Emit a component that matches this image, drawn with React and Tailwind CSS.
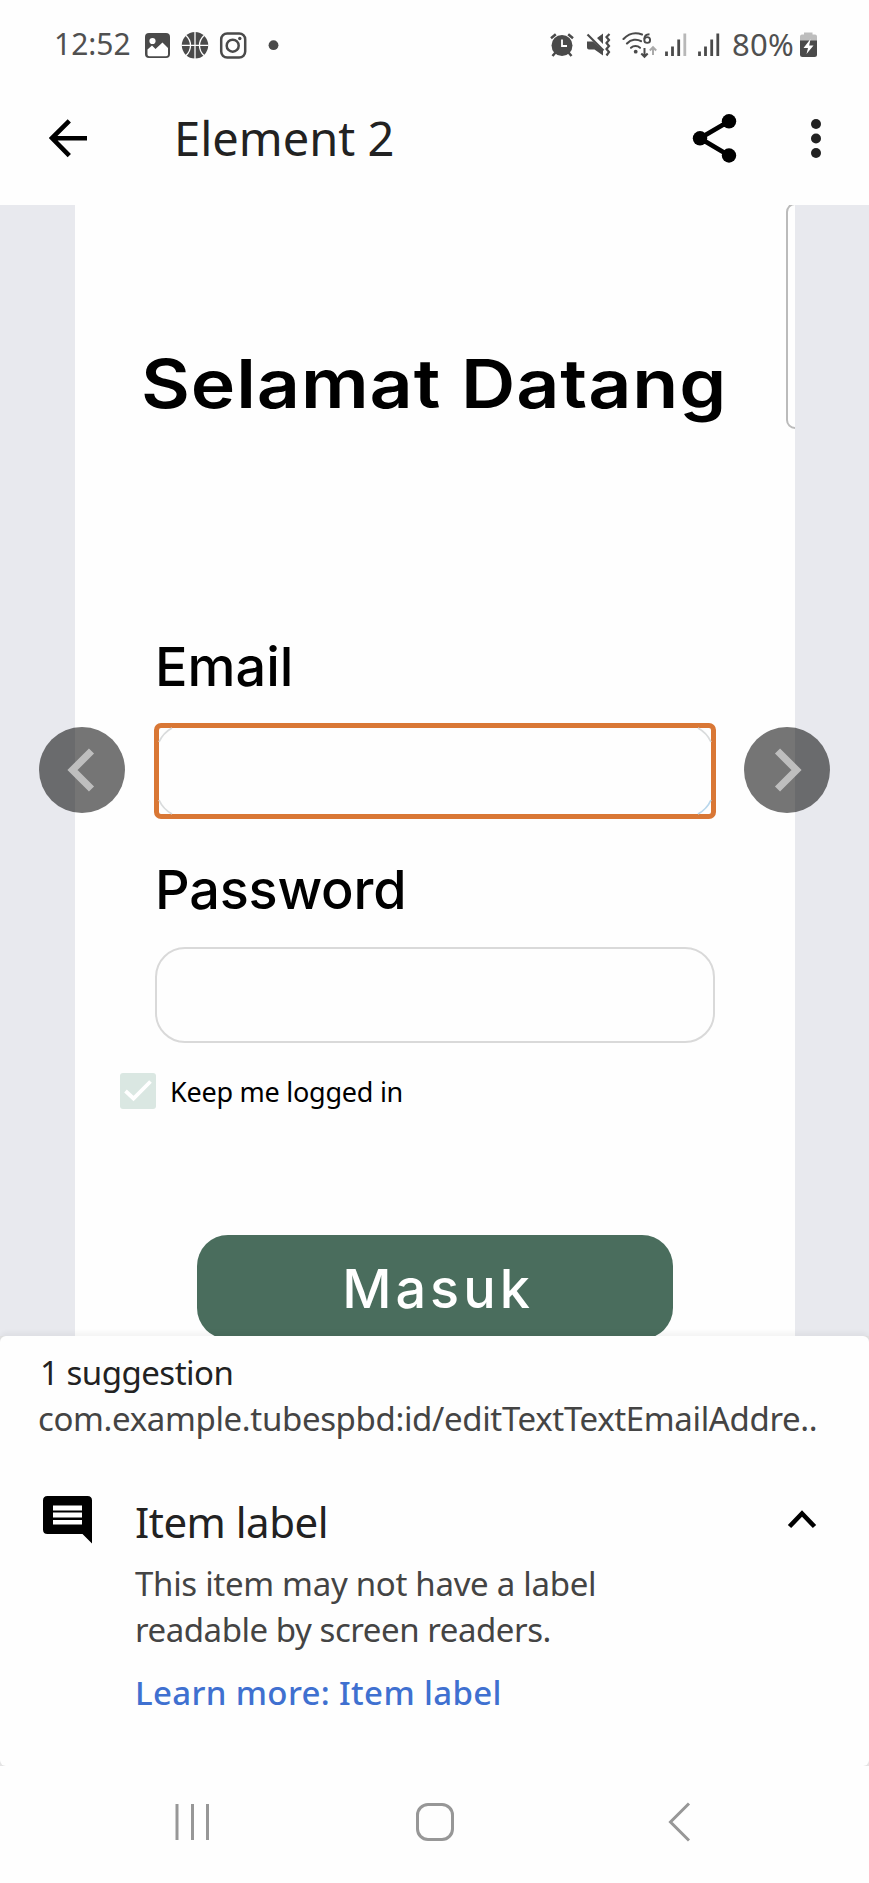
import React from "react";

const systemFont = "font-['Noto_Sans',sans-serif]";
const appFont = "font-['Inter',sans-serif]";

function NotificationIcons() {
  return (
    <svg className="ml-[14px] mt-[3px] h-[30px] w-[136px] shrink-0" viewBox="144 30 136 30" fill="none">
      <rect x="145" y="33" width="25" height="25" rx="4" fill="#4a4a4a" />
      <circle cx="152.5" cy="41" r="3.1" fill="#fff" />
      <path d="M147.5 49.5 152 45.5 155.5 49 162.5 42.5 168 48V54.500Q168 56.300 166.200 56.300H149.300Q147.500 56.300 147.500 54.500Z" fill="#fff" />
      <circle cx="195" cy="45.300" r="13.200" fill="#4a4a4a" />
      <path d="M195 32V59M181.500 45.300H208.500M186 35.500C192 41 192 50 186 55.500M204 35.500C198 41 198 50 204 55.500" stroke="#fff" strokeWidth="1.300" />
      <rect x="221.200" y="33.400" width="24" height="24.200" rx="6" stroke="#4a4a4a" strokeWidth="2.500" />
      <circle cx="232.700" cy="45.700" r="6" stroke="#4a4a4a" strokeWidth="2.500" />
      <circle cx="239.800" cy="38.500" r="1.700" fill="#4a4a4a" />
      <circle cx="273.500" cy="45.200" r="4.900" fill="#4a4a4a" />
    </svg>
  );
}

function SystemIcons() {
  return (
    <svg className="mt-[3px] h-[30px] w-[172px] shrink-0" viewBox="549 30 172 30" fill="none">
      <circle cx="562" cy="45.500" r="10.500" fill="#4a4a4a" />
      <path d="M551 38.200 555.800 34.200M573 38.200 568.200 34.200M555.500 52.500 552.500 56M568.500 52.500 571.500 56" stroke="#4a4a4a" strokeWidth="2.500" />
      <path d="M562 39.500V46H567" stroke="#fff" strokeWidth="1.800" />
      <path d="M587 41.500H593L603 50.500V55.500L594.500 49.500H589Q587 49.500 587 47.500ZM597 38 603 33.500V44Z" fill="#4a4a4a" />
      <path d="M587.500 34.500 603.500 50.500" stroke="#4a4a4a" strokeWidth="2.200" />
      <path d="M609.500 34 606.500 37 609 40 606.500 43 609 46 606.500 49 609 52 606.500 55.500" stroke="#4a4a4a" strokeWidth="2.200" />
      <path d="M623.500 39C629 33.200 636 32.200 642 34.500M627 43.500C631 39.200 637 38.700 641 41.200M631 47.700C633.500 45.500 637.500 45.500 640 47.700" stroke="#4a4a4a" strokeWidth="2.100" strokeLinecap="round" />
      <circle cx="635.700" cy="51.700" r="1.900" fill="#4a4a4a" />
      <path d="M649.500 34.300Q644.300 34.500 644.300 39.200" stroke="#4a4a4a" strokeWidth="1.900" />
      <circle cx="647.200" cy="40" r="2.900" stroke="#4a4a4a" strokeWidth="1.900" />
      <path d="M644.500 48V56.500M641.300 53.500 644.500 56.800 647.700 53.500" stroke="#4a4a4a" strokeWidth="2" />
      <path d="M653 55V47.500M649.800 50.500 653 47.200 656.200 50.500" stroke="#aaa" strokeWidth="2" />
      <path d="M666.500 51.500V56M672.500 46.500V56M678.700 39.500V56" stroke="#4a4a4a" strokeWidth="2.800" />
      <path d="M684.800 33.500V56" stroke="#b8b8b8" strokeWidth="2.800" />
      <path d="M699.500 51.500V56M705.500 46.500V56M711.700 39.500V56M717.800 33.500V56" stroke="#4a4a4a" strokeWidth="2.800" />
    </svg>
  );
}

function BatteryIcon() {
  return (
    <svg className="ml-[3px] mt-[3px] h-[30px] w-[18px] shrink-0" viewBox="800 30 18 30">
      <path d="M804 34.500V32.500H812.500V34.500H815Q817 34.500 817 36.500V41H800V36.500Q800 34.500 802 34.500Z" fill="#bdbdbd" />
      <path d="M800 40.500H817V54.500Q817 57 814.500 57H802.500Q800 57 800 54.500Z" fill="#4a4a4a" />
      <path d="M810.500 39 803.500 48H808L806.500 54 813.500 45.500H809.200Z" fill="#fff" />
    </svg>
  );
}

function StatusBar() {
  return (
    <div className={`flex h-[70px] items-center pl-[54px] pt-[17px] text-[30px] leading-[40px] text-[#505050] ${systemFont}`}>
      <span className="w-[76px] whitespace-nowrap">12:52</span>
      <NotificationIcons />
      <div className="ml-auto flex items-center pr-[51px]">
        <SystemIcons />
        <span className="ml-[11px] mt-[1px] w-[65px] whitespace-nowrap text-[31px] tracking-[0.3px]">80%</span>
        <BatteryIcon />
      </div>
    </div>
  );
}

function TopBar() {
  return (
    <header className="flex h-[135px] items-center pl-[48px]">
      <svg className="h-[40px] w-[40px]" viewBox="48 117 40 40" fill="none" stroke="#000" strokeWidth="4.600">
        <path d="M69.300 119.800 52 137 69.300 154.700M52 137.200H87" />
      </svg>
      <h1 className={`ml-[86px] whitespace-nowrap text-[47px] leading-[64px] text-[#222] ${systemFont}`}>Element 2</h1>
      <div className="ml-auto flex items-center pr-[47px]">
        <svg className="h-[50px] w-[46px]" viewBox="692 112 46 50">
          <path d="M729 120.300 700 137.300 729 154.500" fill="none" stroke="#000" strokeWidth="4.800" />
          <circle cx="729" cy="120.300" r="7.200" />
          <circle cx="700" cy="137.300" r="7.200" />
          <circle cx="729" cy="154.500" r="7.200" />
        </svg>
        <svg className="ml-[72px] h-[42px] w-[12px]" viewBox="810 116 12 42" fill="#222">
          <circle cx="816" cy="123" r="5" />
          <circle cx="816" cy="137.500" r="5" />
          <circle cx="816" cy="152" r="5" />
        </svg>
      </div>
    </header>
  );
}

function PagerButton({ side }) {
  const left = side === "left";
  return (
    <button
      className={`absolute top-[522px] flex h-[86px] w-[86px] items-center justify-center rounded-full bg-black/54 ${left ? "left-[39px]" : "left-[744px]"}`}
    >
      <svg className={`h-[44px] w-[28px] ${left ? "-ml-[2px]" : "ml-[2px] rotate-180"}`} viewBox="0 0 28 44" fill="none">
        <path d="M24.500 3 5.500 22 24.500 41" stroke="#bebebe" strokeWidth="7.200" />
      </svg>
    </button>
  );
}

function Preview() {
  return (
    <main className="relative h-[1131px] overflow-hidden bg-[#e8e9ee]">
      <div className={`relative ml-[75px] flex h-full w-[720px] flex-col overflow-hidden bg-[#fefefe] text-black ${appFont}`}>
        <div className="absolute -right-[20px] -top-[2px] h-[226px] w-[29px] rounded-[9px] border-2 border-[#bbb]" />
        <h2 className="ml-[66px] mt-[139px] w-fit origin-left scale-x-[1.123] whitespace-nowrap text-[67px] font-semibold leading-[80px] tracking-[0.8px]">
          Selamat Datang
        </h2>
        <label className="mt-[211px] whitespace-nowrap pl-[80px] text-[54px] font-medium leading-[64px]">Email</label>
        <div className="ml-[79px] mt-[24px] h-[96px] w-[562px] shrink-0 rounded-[7px] border-[5px] border-[#d97735]">
          <div className="-m-[4px] h-[94px] rounded-[29px]">
            <svg className="h-[94px] w-[560px]" viewBox="0 0 560 94" fill="none" stroke="#d9dbdc" strokeWidth="1.800">
              <path d="M4 18Q8 9 17 4M543 4Q552 9 556 18M4 76Q8 85 17 90" />
              <path d="M556 76Q552 85 543 90" stroke="#b9d7ec" />
            </svg>
          </div>
        </div>
        <label className="mt-[39px] whitespace-nowrap pl-[80px] text-[54px] font-medium leading-[64px] tracking-[-0.2px]">Password</label>
        <div className="ml-[80px] mt-[25px] h-[96px] w-[560px] shrink-0 rounded-[30px] border-2 border-[#d9d9d9]" />
        <div className="ml-[45px] mt-[30px] flex h-[36px] items-center">
          <svg className="h-[36px] w-[36px]" viewBox="0 0 36 36" fill="none">
            <rect width="36" height="36" rx="3" fill="#dae7e2" />
            <path d="M5.500 18 13.500 25.500 30.500 8.500" stroke="#fff" strokeWidth="3.800" />
          </svg>
          <span className={`ml-[14px] mt-[2px] whitespace-nowrap text-[27px] leading-[36px] tracking-[-0.25px] ${systemFont}`}>Keep me logged in</span>
        </div>
        <button className="ml-[122px] mt-[126px] flex h-[104px] w-[476px] shrink-0 items-center justify-center rounded-[31px] bg-[#4a6d5d] pl-[6px] pt-[3px] text-[54px] font-medium leading-[64px] tracking-[4px] text-white">
          Masuk
        </button>
      </div>
      <PagerButton side="left" />
      <PagerButton side="right" />
    </main>
  );
}

function SuggestionSheet() {
  return (
    <div className="bg-[#e4e4e4]">
      <section className={`relative h-[430px] rounded-[6px] bg-[#fefefe] pt-[14px] shadow-[0_-4px_4px_rgba(0,0,0,0.04)] ${systemFont}`}>
        <p className="whitespace-nowrap pl-[40px] text-[33px] leading-[46px] tracking-[-0.5px] text-[#222]">1 suggestion</p>
        <p className="whitespace-nowrap pl-[38px] text-[33px] leading-[46px] tracking-[-0.35px] text-[#444]">com.example.tubespbd:id/editTextTextEmailAddre..</p>
        <div className="mt-[52px] flex">
          <svg className="ml-[43px] mt-[2px] h-[48px] w-[50px] shrink-0" viewBox="0 0 50 48">
            <path d="M4.500 0H44.500Q49 0 49 4.500V47.500L39.500 38H4.500Q0 38 0 33.500V4.500Q0 0 4.500 0Z" />
            <path d="M10 9.500H39V14.500H10ZM10 16.500H39V21.500H10ZM10 24H39V28.500H10Z" fill="#fff" />
          </svg>
          <div className="ml-[42px] mt-[-2px] flex-1">
            <h3 className="whitespace-nowrap text-[42px] leading-[60px] tracking-[-0.5px] text-[#222]">Item label</h3>
            <p className="mt-[9px] whitespace-nowrap text-[33px] leading-[46px] tracking-[-0.3px] text-[#444]">
              This item may not have a label
              <br />
              <span className="tracking-[-0.45px]">readable by screen readers.</span>
            </p>
            <a className="mt-[17px] block whitespace-nowrap text-[33px] font-medium leading-[46px] tracking-[0.35px] text-[#3f70d0]">Learn more: Item label</a>
          </div>
          <svg className="mr-[51px] mt-[15px] h-[20px] w-[31px] shrink-0" viewBox="0 0 31 20" fill="none" stroke="#000" strokeWidth="4.600">
            <path d="M2.500 17.500 15 4.500 27.500 17.500" />
          </svg>
        </div>
      </section>
    </div>
  );
}

function NavigationBar() {
  return (
    <nav className="flex h-[117px] items-center bg-[#fefefe] pb-[5px]">
      <svg className="ml-[174px] h-[38px] w-[37px]" viewBox="0 0 37 38" stroke="#979797" strokeWidth="3">
        <path d="M3 1V37M18.500 1V37M33.500 1V37" />
      </svg>
      <div className="ml-[205px] h-[38px] w-[38px] rounded-[12px] border-[3px] border-[#979797]" />
      <svg className="ml-[214px] h-[40px] w-[24px]" viewBox="0 0 24 40" fill="none" stroke="#979797" strokeWidth="3">
        <path d="M21 1.500 2.500 20 21 38.500" />
      </svg>
    </nav>
  );
}

export default function App() {
  return (
    <div className="h-[1883px] w-[869px] overflow-hidden bg-[#fefefe]">
      <StatusBar />
      <TopBar />
      <Preview />
      <SuggestionSheet />
      <NavigationBar />
    </div>
  );
}
